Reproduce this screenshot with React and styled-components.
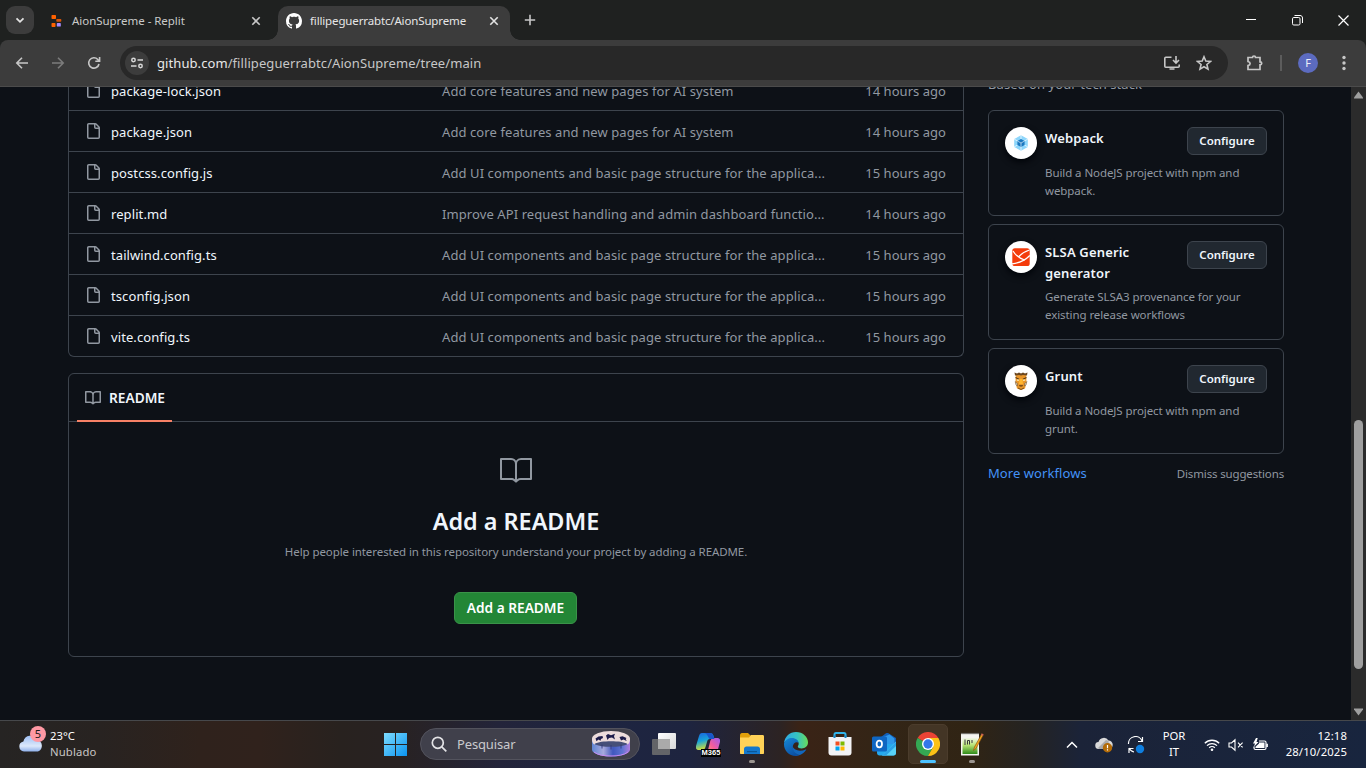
import React from "react";
import styled, { createGlobalStyle } from "styled-components";

const GlobalStyle = createGlobalStyle`
  * { box-sizing: border-box; }
  body { margin: 0; background: #0d1117; overflow: hidden; font-family: "Noto Sans", "Open Sans", sans-serif; }
  svg { display: block; flex: none; }
  button { font-family: inherit; margin: 0; }
`;

const Screen = styled.div`
  width: 1366px;
  height: 768px;
  display: flex;
  flex-direction: column;
  overflow: hidden;
  background: #0d1117;
`;

/* ---------- browser chrome ---------- */

const TabStrip = styled.div`
  height: 40px;
  flex: none;
  display: flex;
  background: #1f2120;
`;

const TabSearch = styled.div`
  width: 28px;
  height: 28px;
  margin: 6px 6px 0 6px;
  border-radius: 9px;
  background: #3c3c3c;
  display: grid;
  place-items: center;
`;

const Tab = styled.div`
  position: relative;
  width: ${(p) => (p.$active ? 232 : 238)}px;
  height: 34px;
  margin-top: 6px;
  padding: 0 ${(p) => (p.$active ? 10 : 16)}px 5px 8px;
  display: flex;
  align-items: center;
  border-radius: 10px 10px 0 0;
  background: ${(p) => (p.$active ? "#3c3c3c" : "transparent")};
  color: ${(p) => (p.$active ? "#e6e6e6" : "#c9cac9")};
  &::before, &::after {
    content: "";
    display: ${(p) => (p.$active ? "block" : "none")};
    position: absolute;
    bottom: 0;
    width: 10px;
    height: 10px;
  }
  &::before { left: -10px; background: radial-gradient(circle at 0 0, transparent 9.5px, #3c3c3c 10px); }
  &::after { right: -10px; background: radial-gradient(circle at 100% 0, transparent 9.5px, #3c3c3c 10px); }
`;

const TabTitle = styled.span`
  flex: 1;
  margin-left: 8px;
  padding-top: 1px;
  font-size: 11.5px;
  line-height: 16px;
  letter-spacing: ${(p) => p.$spacing || 0}px;
  white-space: nowrap;
`;

const NewTab = styled.div`
  width: 40px;
  height: 40px;
  display: grid;
  place-items: center;
`;

const WindowButtons = styled.div`
  display: flex;
  margin-left: auto;
`;

const WindowButton = styled.div`
  width: 46px;
  height: 40px;
  display: grid;
  place-items: center;
`;

const ToolbarBack = styled.div`
  flex: none;
  background: #1f2120;
`;

const Toolbar = styled.div`
  height: 47px;
  display: flex;
  align-items: center;
  padding: 0 0 1px 10px;
  border-radius: 8px 8px 0 0;
  border-bottom: 1px solid #4b4b4b;
  background: #3c3c3c;
`;

const ToolButton = styled.div`
  width: ${(p) => p.$width || 36}px;
  display: grid;
  place-items: center;
  flex: none;
`;

const AddressBar = styled.div`
  width: 1108px;
  height: 34px;
  flex: none;
  padding: 0 8px 0 5px;
  display: flex;
  align-items: center;
  border-radius: 17px;
  background: #282828;
`;

const SiteInfo = styled.div`
  width: 24px;
  height: 24px;
  border-radius: 50%;
  background: #3c3c3c;
  display: grid;
  place-items: center;
`;

const Address = styled.div`
  flex: 1;
  margin-left: 8px;
  font-size: 13px;
  letter-spacing: 0.08px;
  color: #c7c7c7;
  b { font-weight: 400; color: #e8e8e8; }
`;

const Divider = styled.div`
  width: 2px;
  height: 16px;
  flex: none;
  margin: 0 16px 0 0;
  background: #5c5c5c;
`;

const Avatar = styled.div`
  width: 20px;
  height: 20px;
  flex: none;
  border-radius: 50%;
  background: #5c6bc0;
  color: #eceef8;
  font-size: 11px;
  line-height: 20px;
  text-align: center;
`;

/* ---------- page ---------- */

const Viewport = styled.div`
  height: 633px;
  flex: none;
  display: flex;
  overflow: hidden;
  background: #0d1117;
`;

const Page = styled.main`
  width: 1351px;
  display: flex;
  align-items: flex-start;
  gap: 24px;
  padding-left: 68px;
`;

const Content = styled.div`
  width: 896px;
`;

const FileTable = styled.div`
  margin-top: -17px;
  border: 1px solid #3d444d;
  border-top: 0;
  border-radius: 0 0 6px 6px;
`;

const FileRow = styled.div`
  height: 41px;
  display: flex;
  align-items: center;
  padding: 0 17px 0 16px;
  border-bottom: 1px solid #3d444d;
  font-size: 13px;
  line-height: 21px;
  letter-spacing: 0.09px;
  white-space: nowrap;
  color: #9198a1;
  &:last-child { height: 40px; border-bottom: 0; }
`;

const FileName = styled.span`
  width: 331px;
  margin-left: 10px;
  padding-top: 3px;
  color: #f0f6fc;
`;

const CommitMessage = styled.span`
  flex: 1;
  padding-top: 3px;
`;

const FileAge = styled.span`
  padding-top: 3px;
  letter-spacing: 0.04px;
`;

const ReadmeBox = styled.section`
  height: 284px;
  margin-top: 16px;
  border: 1px solid #3d444d;
  border-radius: 6px;
`;

const ReadmeTabs = styled.div`
  height: 48px;
  padding-left: 8px;
  border-bottom: 1px solid #3d444d;
`;

const ReadmeTab = styled.div`
  width: 95px;
  height: 48px;
  display: flex;
  align-items: center;
  gap: 8px;
  padding-left: 8px;
  border-bottom: 2px solid #f78166;
  color: #f0f6fc;
  font-size: 13.7px;
  font-weight: 600;
  svg { margin-top: 2px; }
`;

const Blankslate = styled.div`
  display: flex;
  flex-direction: column;
  align-items: center;
  padding-top: 32px;
`;

const BlankTitle = styled.h2`
  margin: 17px 0 0;
  font-size: 23.4px;
  line-height: 36px;
  font-weight: 600;
  color: #f0f6fc;
`;

const BlankText = styled.p`
  margin: 4px 0 0;
  font-size: 11.5px;
  line-height: 18px;
  letter-spacing: -0.08px;
  color: #9198a1;
`;

const PrimaryButton = styled.button`
  width: 123px;
  height: 32px;
  margin: 31px 1px 0 0;
  padding: 0 0 2px;
  border: 1px solid #3a9349;
  border-radius: 6px;
  background: #238636;
  color: #fff;
  font-size: 13.7px;
  font-weight: 600;
  white-space: nowrap;
`;

const Sidebar = styled.aside`
  width: 296px;
`;

const SideNote = styled.div`
  margin-top: -13px;
  height: 36px;
  font-size: 13px;
  line-height: 21px;
  letter-spacing: 0.07px;
  color: #9198a1;
`;

const WorkflowCard = styled.div`
  display: flex;
  margin-bottom: 8px;
  padding: 16px 16px 15px;
  border: 1px solid #3d444d;
  border-radius: 6px;
`;

const WorkflowLogo = styled.div`
  width: 32px;
  height: 32px;
  flex: none;
  border-radius: 50%;
  background: #fff;
  display: grid;
  place-items: center;
  box-shadow: 0 3px 6px #010409;
`;

const WorkflowBody = styled.div`
  flex: 1;
  margin-left: 8px;
`;

const WorkflowHead = styled.div`
  min-height: 33px;
  display: flex;
  justify-content: space-between;
  align-items: flex-start;
`;

const WorkflowTitle = styled.div`
  width: 110px;
  padding-top: 1px;
  font-size: 13px;
  line-height: 21px;
  font-weight: 600;
  letter-spacing: 0.16px;
  color: #f0f6fc;
`;

const ConfigureButton = styled.button`
  width: 80px;
  height: 28px;
  padding: 0 0 1px;
  border: 1px solid #3d444d;
  border-radius: 6px;
  background: #212830;
  color: #f0f6fc;
  font-size: 11.5px;
  font-weight: 600;
`;

const WorkflowText = styled.div`
  margin-top: 4px;
  width: 210px;
  font-size: 11.5px;
  line-height: 18px;
  letter-spacing: -0.08px;
  color: #9198a1;
`;

const SideFooter = styled.div`
  display: flex;
  justify-content: space-between;
  align-items: center;
  height: 22px;
  font-size: 11.5px;
  letter-spacing: -0.15px;
  color: #9198a1;
`;

const MoreLink = styled.a`
  font-size: 13px;
  letter-spacing: 0.07px;
  color: #4493f8;
`;

const ScrollTrack = styled.div`
  width: 15px;
  display: flex;
  flex-direction: column;
  align-items: center;
  background: #2b2b2b;
  padding: 4px 0 4px;
`;

const ScrollThumb = styled.div`
  width: 9px;
  height: 249px;
  margin: 321px 0 auto;
  border-radius: 5px;
  background: #9f9f9f;
`;

/* ---------- taskbar ---------- */

const Taskbar = styled.div`
  height: 48px;
  flex: none;
  display: flex;
  align-items: center;
  border-top: 1px solid #46484b;
  background: linear-gradient(90deg, #262423 0, #282321 100px, #2f221c 200px, #30221c 260px, #28221f 340px, #282222 400px, #23243a 500px, #1e2541 600px, #1e243f 690px, #2c2323 780px, #3a2316 800px, #332516 880px, #302414 970px, #242322 1030px, #1b2338 1080px, #18253e 1366px);
`;

const Weather = styled.div`
  width: 379px;
  height: 100%;
  padding: 4px 0 0 16px;
  display: flex;
`;

const WeatherIcon = styled.div`
  position: relative;
  width: 34px;
  padding-top: 8px;
`;

const WeatherBadge = styled.span`
  position: absolute;
  left: 14px;
  top: 1px;
  width: 16px;
  height: 16px;
  border-radius: 50%;
  background: #ff99a4;
  color: #1b1b1b;
  font-size: 11px;
  line-height: 16px;
  text-align: center;
`;

const WeatherText = styled.div`
  font-size: 11.3px;
  line-height: 16px;
  color: #fff;
  padding-top: 3px;
  span { display: block; color: #c8c6c5; letter-spacing: 0.15px; }
`;

const StartButton = styled.div`
  width: 33px;
  padding-left: 5px;
`;

const SearchPill = styled.div`
  width: 220px;
  height: 32px;
  margin: 0 2px 1px 8px;
  padding: 0 9px 0 10px;
  display: flex;
  align-items: center;
  border: 1px solid #53535d;
  border-radius: 16px;
  background: #40404b;
  color: #c9c9cd;
  font-size: 13px;
`;

const SearchLabel = styled.span`
  flex: 1;
  margin-left: 10px;
  letter-spacing: -0.15px;
`;

const AppSlot = styled.div`
  position: relative;
  width: 40px;
  height: 40px;
  margin: 0 2px 1px;
  display: grid;
  place-items: center;
  border: 1px solid ${(p) => (p.$active ? "#4b3c2c" : "transparent")};
  border-radius: 5px;
  background: ${(p) => (p.$active ? "#433525" : "transparent")};
  &::after {
    content: "";
    display: ${(p) => (p.$active || p.$open ? "block" : "none")};
    position: absolute;
    bottom: 0;
    left: ${(p) => (p.$active ? 11 : 16)}px;
    width: ${(p) => (p.$active ? 16 : 6)}px;
    height: 3px;
    border-radius: 2px;
    background: ${(p) => (p.$active ? "#4cc2ff" : "#9b9590")};
  }
`;

const IconLabel = styled.span`
  position: absolute;
  left: 12px;
  top: 24px;
  width: 20px;
  height: 8px;
  text-align: center;
  font: 700 7.5px/8px "Liberation Sans", sans-serif;
  background: #000;
  color: #fff;
`;

const Tray = styled.div`
  margin-left: auto;
  padding-right: 19px;
  display: flex;
  align-items: center;
  color: #fff;
`;

const TrayItem = styled.div`
  width: ${(p) => p.$width}px;
  display: grid;
  place-items: center;
`;

const TrayText = styled.div`
  width: ${(p) => p.$width}px;
  text-align: ${(p) => p.$align};
  font-size: 11.3px;
  line-height: 16px;
  letter-spacing: ${(p) => p.$spacing || 0}px;
  padding-bottom: 1px;
`;

/* ---------- icons ---------- */

const Line = ({ w = 16, h = w, box = `0 0 ${w} ${h}`, color = "#c7c7c7", sw = 1.6, children }) => (
  <svg width={w} height={h} viewBox={box} fill="none" stroke={color} strokeWidth={sw}>{children}</svg>
);

const CloseIcon = ({ color }) => <Line w={12} color={color} sw={1.6}><path d="M2.3 2.3 9.7 9.7M9.7 2.3 2.3 9.7" /></Line>;

const GithubMark = () => (
  <svg width="16" height="16" viewBox="0 0 16 16" fill="#fff">
    <path d="M8 0c4.42 0 8 3.58 8 8a8.013 8.013 0 0 1-5.45 7.59c-.4.08-.55-.17-.55-.38 0-.27.01-1.13.01-2.2 0-.75-.25-1.23-.54-1.48 1.78-.2 3.65-.88 3.65-3.95 0-.88-.31-1.59-.82-2.15.08-.2.36-1.02-.08-2.12 0 0-.67-.22-2.2.82-.64-.18-1.32-.27-2-.27-.68 0-1.36.09-2 .27-1.53-1.03-2.2-.82-2.2-.82-.44 1.1-.16 1.92-.08 2.12-.51.56-.82 1.28-.82 2.15 0 3.06 1.86 3.75 3.64 3.95-.23.2-.44.55-.51 1.07-.46.21-1.61.55-2.33-.66-.15-.24-.6-.83-1.23-.82-.67.01-.27.38.01.53.34.19.73.9.82 1.13.16.45.68 1.31 2.69.94 0 .67.01 1.3.01 1.49 0 .21-.15.45-.55.38A7.995 7.995 0 0 1 0 8c0-4.42 3.58-8 8-8Z" />
  </svg>
);

const ReplitMark = () => (
  <svg width="16" height="16" viewBox="0 0 16 16">
    <rect x="3.500" y="2" width="4.500" height="4" rx=".7" fill="#ff6200" />
    <rect x="8.300" y="6" width="5" height="2.700" rx=".7" fill="#d9540a" />
    <rect x="3.500" y="10" width="4" height="4" rx=".7" fill="#ff6200" />
    <rect x="8.800" y="10" width="4" height="3.600" rx=".7" fill="#a58bff" />
  </svg>
);

const FileIcon = () => (
  <svg width="16" height="16" viewBox="0 0 16 16" fill="#9198a1">
    <path d="M2 1.75C2 .784 2.784 0 3.75 0h6.586c.464 0 .909.184 1.237.513l2.914 2.914c.329.328.513.773.513 1.237v9.586A1.75 1.75 0 0 1 13.25 16h-9.5A1.75 1.75 0 0 1 2 14.25Zm1.75-.25a.25.25 0 0 0-.25.25v12.5c0 .138.112.25.25.25h9.5a.25.25 0 0 0 .25-.25V6h-2.75A1.75 1.75 0 0 1 9 4.25V1.5Zm6.75.062V4.25c0 .138.112.25.25.25h2.688l-.011-.013-2.914-2.914-.013-.011Z" />
  </svg>
);

const BookIcon = () => (
  <svg width="16" height="16" viewBox="0 0 16 16" fill="#9198a1">
    <path d="M0 1.75A.75.75 0 0 1 .75 1h4.253c1.227 0 2.317.59 3 1.501A3.743 3.743 0 0 1 11.006 1h4.245a.75.75 0 0 1 .75.75v10.5a.75.75 0 0 1-.75.75h-4.507a2.25 2.25 0 0 0-1.591.659l-.622.621a.75.75 0 0 1-1.06 0l-.622-.621A2.25 2.25 0 0 0 5.258 13H.75a.75.75 0 0 1-.75-.75Zm7.251 10.324.004-5.073-.002-2.253A2.25 2.25 0 0 0 5.003 2.5H1.5v9h3.757a3.75 3.75 0 0 1 1.994.574ZM8.755 4.75l-.004 7.322a3.752 3.752 0 0 1 1.992-.572H14.5v-9h-3.495a2.25 2.25 0 0 0-2.25 2.25Z" />
  </svg>
);

const BookLargeIcon = () => (
  <svg width="32" height="32" viewBox="0 0 24 24" fill="#9198a1">
    <path d="M0 3.75A.75.75 0 0 1 .75 3h7.497c1.566 0 2.945.8 3.751 2.014A4.495 4.495 0 0 1 15.75 3h7.5a.75.75 0 0 1 .75.75v15.063a.752.752 0 0 1-.755.75l-7.682-.052a3 3 0 0 0-2.142.878l-.89.891a.75.75 0 0 1-1.061 0l-.902-.901a2.996 2.996 0 0 0-2.121-.879H.75a.75.75 0 0 1-.75-.75Zm12.75 15.232a4.503 4.503 0 0 1 2.823-.971l6.927.047V4.5h-6.75a3 3 0 0 0-3 3ZM11.247 7.497a3 3 0 0 0-3-2.997H1.5V18h6.947c1.018 0 2.006.346 2.803.98Z" />
  </svg>
);

const WebpackLogo = () => (
  <svg width="16" height="16" viewBox="0 0 16 16">
    <path d="M8 .3 14.8 4.1v7.8L8 15.7 1.2 11.9V4.1Z" fill="#8ed6fb" />
    <path d="M8 .3V4M8 12v3.7M1.2 4.1 4.6 6M14.8 4.1 11.4 6M1.2 11.9 4.6 10M14.8 11.9 11.4 10" stroke="#fff" strokeWidth=".7" />
    <path d="M8 3.9 11.6 6v4L8 12.1 4.4 10V6Z" fill="#1c78c0" />
    <path d="M8 8v4.1M8 8 4.4 6M8 8l3.6-2" stroke="#fff" strokeWidth=".6" />
  </svg>
);

const SlsaLogo = () => (
  <svg width="18" height="18" viewBox="0 0 18 18">
    <rect x=".3" y=".2" width="17.4" height="17.8" rx="2.6" fill="#f43b0b" />
    <path d="M1 3C4 8 8 10.500 13 12.200M17.500 2C13 3.500 9.500 5.500 7 8.500M17.800 7.500C13 12.500 7 15 0 15.800" fill="none" stroke="#fff" strokeWidth="1.200" />
  </svg>
);

const GruntLogo = () => (
  <svg width="16" height="20" viewBox="0 0 16 20">
    <path d="M2.800 3.500h10.400l.3 8-1.500 6L8 19l-4-1.500-1.500-6Z" fill="#e9962a" />
    <path d="M1.500 1.500 4 2.500l2-1L8 2.500l2-1 2 1 2.500-1-.5 3L10 4 8 4.500 6 4 2 4.500Z" fill="#6b4720" />
    <path d="m2.500 6.500 3.500 1.700M13.500 6.500 10 8.200" stroke="#593813" strokeWidth="1.100" />
    <path d="M3.800 8.500h2.200v1.200H3.800ZM10 8.500h2.200v1.200H10Z" fill="#fff0b8" />
    <path d="M6.500 8h3l.5 5H6Z" fill="#ffb62e" />
    <path d="M5.800 14.300h4.400l-1 1.200H6.800Z" fill="#593813" />
    <path d="M2.200 10.500 3 14l1.500 1V12.800ZM13.800 10.500 13 14l-1.500 1V12.800Z" fill="#d5d0bd" stroke="#6b4720" strokeWidth=".5" />
    <path d="m5 17 3 1.500L11 17" fill="none" stroke="#7a4d18" />
  </svg>
);

const CloudIcon = () => (
  <svg width="28" height="22" viewBox="0 0 28 22">
    <defs><linearGradient id="cloud" x2="0" y2="1"><stop stopColor="#9fc0f4" /><stop offset=".65" stopColor="#dce8fb" /><stop offset="1" stopColor="#8fb0ea" /></linearGradient></defs>
    <path d="M8 18a5 5 0 0 1-.6-9.900A7.200 7.200 0 0 1 21 6.500 6 6 0 0 1 22 18Z" transform="translate(0 .5)" fill="url(#cloud)" />
  </svg>
);

const WindowsLogo = () => (
  <svg width="23" height="23" viewBox="0 0 23 23">
    <defs><linearGradient id="win" x2="1" y2="1"><stop stopColor="#7ddcff" /><stop offset="1" stopColor="#0a94f0" /></linearGradient></defs>
    <path d="M0 0h11v11H0ZM12 0h11v11H12ZM0 12h11v11H0ZM12 12h11v11H12Z" fill="url(#win)" />
  </svg>
);

const DrumArt = () => (
  <svg width="38" height="26" viewBox="0 0 38 26">
    <defs>
      <linearGradient id="drum" x2="1"><stop stopColor="#5f86d4" /><stop offset=".3" stopColor="#a7a9dc" /><stop offset=".55" stopColor="#4057bd" /><stop offset=".8" stopColor="#5f74d2" /><stop offset="1" stopColor="#b07de0" /></linearGradient>
    </defs>
    <path d="M0 7v12c1 4 9 6.500 19 6.500S37 23 38 19V7Z" fill="url(#drum)" />
    <ellipse cx="19" cy="7.500" rx="19" ry="7.500" fill="#ecdcdc" />
    <path d="M0 8c0 4 1.500 5 2.500 5.500C6 10.500 12 9.500 19 9.500s13 1 16.500 4C37 12.500 38 11 38 8Z" fill="#ecdcdc" />
    <path d="M2.500 13C6 10.800 12 10.200 19 10.200s13 .6 16.500 2.800C32 15 26 15.800 19 15.800S6 15 2.500 13Z" fill="#454f78" />
    <path d="M3.500 7.500 6.500 5.500l4-.5.5 2-2 1-.5 1.800L6.500 8.500 4.500 10.200ZM14 4.500l2-1.500L19 4.200l4-1.500L22 5.200 23 8.500 20 6.500 17 7l-1.500 2ZM27.500 6l3-.7L34.500 7l-.8 1 1 2L31.500 8.500 29 9.500Z" fill="#1c1b4a" />
    <path d="M10 13.500v4M19 14v4.500M29 13.500v4" stroke="#2c3477" strokeWidth=".8" />
    <path d="M2 21c4 3 10 4 17 4s13-1 17-4" fill="none" stroke="#c88af0" strokeWidth="1" />
  </svg>
);

const TaskViewIcon = () => (
  <svg width="24" height="22" viewBox="0 0 24 22">
    <defs><linearGradient id="tv" x2="1" y2="1"><stop stopColor="#fff" /><stop offset="1" stopColor="#d8d8d8" /></linearGradient></defs>
    <rect x="6" width="18" height="16" rx="1" fill="url(#tv)" />
    <rect y="6" width="18" height="16" rx="1" fill="#6d6d6d" fillOpacity=".88" />
    <rect x="6" y="6" width="12" height="10" fill="#aaa" />
  </svg>
);

const CopilotIcon = () => (
  <svg width="24" height="24" viewBox="0 0 24 24">
    <defs>
      <linearGradient id="cpa" x2=".3" y2="1"><stop stopColor="#1b62dd" /><stop offset=".5" stopColor="#17a3d8" /><stop offset="1" stopColor="#d7df36" /></linearGradient>
      <linearGradient id="cpb" x1="1" x2="0" y2="1"><stop stopColor="#9c5cf0" /><stop offset=".5" stopColor="#f45d9c" /><stop offset="1" stopColor="#ffad61" /></linearGradient>
    </defs>
    <path d="M6 1h8c2 0 3 1 3.500 3L18.500 7H14c-2 0-2.500 1-3 3l-1.500 5c-.5 2-1.500 3-3.500 3H3c-2.500 0-3.500-1.500-3-4L3 4c.5-2 1.500-3 3-3Z" fill="url(#cpa)" />
    <path d="M14 6h7c2.500 0 3.500 1.500 3 4l-2.500 9c-.5 2-2 3-4 3H9c2 0 2.500-2 3-4l2-8c.3-2 1-3 3-4Z" fill="url(#cpb)" />
    <path d="M8 1h6c2 0 3 1 3.500 3L18.500 7H14c-2 0-2-6-6-6Z" fill="#1956c8" />
  </svg>
);

const FolderIcon = () => (
  <svg width="24" height="24" viewBox="0 0 24 24">
    <path d="M0 3.500C0 2 .7 1 2 1h6l2.500 2.500V8H0Z" fill="#e09f0a" />
    <path d="M0 5.500h9L11 3h11.500c1 0 1.500.5 1.500 1.500V21c0 .6-.4 1-1 1H1c-.6 0-1-.4-1-1Z" fill="#ffd257" />
    <path d="M4 22v-5c0-1.500 1-2.500 2.500-2.500h11c1.500 0 2.500 1 2.500 2.500v5Z" fill="#1377cc" />
    <path d="M7 19h10v1.200H7Z" fill="#0a5596" />
  </svg>
);

const EdgeIcon = () => (
  <svg width="24" height="24" viewBox="0 0 24 24">
    <defs>
      <linearGradient id="ega" x2="1"><stop stopColor="#2fa8e6" /><stop offset=".55" stopColor="#36c2c1" /><stop offset="1" stopColor="#68dc5a" /></linearGradient>
      <linearGradient id="egb" x2=".6" y2="1"><stop stopColor="#1689d7" /><stop offset="1" stopColor="#0b50a4" /></linearGradient>
    </defs>
    <path d="M0 11C.8 4.500 5.700 0 12 0c7 0 12 5 12 10.300 0 4-3 6.200-6.300 6.200-2.500 0-3.900-1-3.900-2 0-.7.9-1 .9-2.700 0-2.600-2.400-4.600-5.500-4.600C4.500 7.200 1.500 9 0 11Z" fill="url(#ega)" />
    <path d="M0 11.500C1.200 8 4.500 6 8 6c3.700 0 6.500 2.500 6.700 5-2.200-1.800-6 .2-6 4.300 0 4 3.300 6.700 7 7.700-1 .6-2.500 1-4 1C5 24 0 18.500 0 12.500Z" fill="url(#egb)" />
    <path d="M8.300 14c-.5 4.500 3.200 8.700 7.700 9 2.700-.9 5-3 6.200-5.200.2-.4-.1-.6-.5-.4-6 2.600-11.500 1-13.400-3.400Z" fill="#1267bd" />
  </svg>
);

const StoreIcon = () => (
  <svg width="24" height="24" viewBox="0 0 24 24">
    <path d="M6.500 6V2.500c0-1 .5-1.500 1.500-1.500h8c1 0 1.500.5 1.500 1.500V6" fill="none" stroke="#32b4ea" strokeWidth="2" />
    <path d="M.5 5h23v15.500c0 2-1 3-3 3h-17c-2 0-3-1-3-3Z" fill="#f3f3f5" />
    <path d="M7.500 9.500h4v4h-4Z" fill="#f25022" /><path d="M12.500 9.500h4v4h-4Z" fill="#7fba00" />
    <path d="M7.500 14.500h4v4h-4Z" fill="#00a4ef" /><path d="M12.500 14.500h4v4h-4Z" fill="#ffb900" />
    <path d="M6.500 6V3.500M17.500 6V3.500" stroke="#1685c5" strokeWidth="2" />
  </svg>
);

const OutlookIcon = () => (
  <svg width="24" height="24" viewBox="0 0 24 24">
    <path d="M5 8 14 1.300c.8-.5 1.700-.5 2.500 0L24 6v5H5Z" fill="#135fb8" />
    <path d="M9 6 17.500 2.500l5 4V14H9Z" fill="#2f98ea" />
    <path d="M5 12h19v9c0 1.500-1 2.500-2.500 2.500H7.500C6 23.500 5 22.500 5 21Z" fill="#25a8ed" />
    <path d="M24 9.500v11.500c0 1.500-1 2.500-2.500 2.500H10Z" fill="#58d2f8" />
    <path d="M10 23.500 24 10v4L14 23.500Z" fill="#2ba2e8" />
    <rect y="4.500" width="15" height="15" rx="1.500" fill="#0f66c2" />
    <ellipse cx="7.300" cy="12" rx="2.700" ry="3.300" fill="none" stroke="#fff" strokeWidth="1.800" />
  </svg>
);

const ChromeIcon = () => (
  <svg width="24" height="24" viewBox="0 0 48 48">
    <path d="M24 24 3.200 12A24 24 0 0 1 44.800 12Z" fill="#ea4335" />
    <path d="M24 24 3.200 12A24 24 0 0 0 24 48L34.400 30Z" fill="#34a853" />
    <path d="M44.800 12H24v12l10.400 6L24 48A24 24 0 0 0 44.800 12Z" fill="#fbc116" />
    <circle cx="24" cy="24" r="12" fill="#fff" />
    <circle cx="24" cy="24" r="9.300" fill="#3478ea" />
  </svg>
);

const NotepadIcon = () => (
  <svg width="24" height="24" viewBox="0 0 24 24">
    <defs><linearGradient id="np" x2="0" y2="1"><stop stopColor="#f1f6e7" /><stop offset=".45" stopColor="#b7e374" /><stop offset="1" stopColor="#2e8b18" /></linearGradient></defs>
    <path d="M1 1.500h18v22H1Z" fill="#f5f5f1" />
    <path d="M2.500 6h15v16h-15Z" fill="url(#np)" />
    <path d="M1.500 1.500h17" stroke="#555" strokeWidth="1.500" strokeDasharray="1 1" />
    <path d="M5 7.500v5.500M7.500 12.500V8.500h2V12.500M12 8v3" fill="none" stroke="#393939" strokeWidth="1" />
    <path d="M21.300 2.500 14.500 15l-1 3.500L16 16.500 23 3.500Z" fill="#f0a51d" stroke="#7d4b13" strokeWidth=".6" />
    <path d="m21.700 1.200 2 1.300-.8 1.500L21 3Z" fill="#c96353" />
  </svg>
);

const TrayCloud = () => (
  <svg width="18" height="16" viewBox="0 0 18 16">
    <path d="M4 12A3.500 3.500 0 0 1 3.500 5 5.500 5.500 0 0 1 13.500 3.500 4 4 0 0 1 13.500 12Z" fill="#d9d9d9" />
    <path d="M3 11 11 3l2.500 1L14 12H4Z" fill="#a9a9a9" />
    <circle cx="12.500" cy="10.700" r="4.700" fill="#b36b07" />
    <path d="M12.500 8v3.300M12.500 12.200v1.300" stroke="#fff" strokeWidth="1.200" />
  </svg>
);

const SyncIcon = () => (
  <svg width="18" height="18" viewBox="0 0 18 18" fill="none" stroke="#fff" strokeWidth="1.200">
    <path d="M1.500 8A7 7 0 0 1 15 5M15.500 1v4.500H11M2 12A7 7 0 0 0 7 16M6.500 12.500H2V17" />
    <circle cx="13" cy="13" r="4.200" fill="#0f7fe0" stroke="none" />
  </svg>
);

const WifiIcon = () => (
  <Line w={16} h={14} color="#fff" sw={1.3}>
    <path d="M.8 5.200a10.300 10.300 0 0 1 14.400 0M3 7.600a7.200 7.200 0 0 1 10 0M5.200 9.800a4 4 0 0 1 5.600 0" />
    <circle cx="8" cy="11.800" r="1.300" fill="#fff" stroke="none" />
  </Line>
);

const MuteIcon = () => (
  <Line w={16} h={14} color="#fff" sw={1.100}>
    <path d="M1 5h2.500L7 1.800v10.400L3.500 9H1ZM10 4.700l4.600 4.600M14.600 4.700 10 9.300" />
  </Line>
);

const BatteryIcon = () => (
  <Line w={17} h={14} color="#fff" sw={1.200}>
    <path d="M7 3h5.500c1 0 1.500.5 1.500 1.500v5.500c0 1-.5 1.500-1.500 1.500H3.500C2.500 11.500 2 11 2 10V8.500M15.300 5.700v3.200" />
    <path d="M7 4.500h5.500V10H3.500V8.700L7 5.500Z" fill="#fff" stroke="none" />
    <path d="M4 0 1 5.500h2L2 8.800 6.500 4H4.500L5.700 0Z" fill="#fff" stroke="none" />
  </Line>
);

/* ---------- data ---------- */

const UI_MSG = "Add UI components and basic page structure for the applica...";
const CORE_MSG = "Add core features and new pages for AI system";

const files = [
  ["package-lock.json", CORE_MSG, "14 hours ago"],
  ["package.json", CORE_MSG, "14 hours ago"],
  ["postcss.config.js", UI_MSG, "15 hours ago"],
  ["replit.md", "Improve API request handling and admin dashboard functio...", "14 hours ago"],
  ["tailwind.config.ts", UI_MSG, "15 hours ago"],
  ["tsconfig.json", UI_MSG, "15 hours ago"],
  ["vite.config.ts", UI_MSG, "15 hours ago"],
];

const workflows = [
  ["Webpack", "Build a NodeJS project with npm and webpack.", WebpackLogo],
  ["SLSA Generic generator", "Generate SLSA3 provenance for your existing release workflows", SlsaLogo],
  ["Grunt", "Build a NodeJS project with npm and grunt.", GruntLogo],
];

const apps = [
  { id: "taskview", Icon: TaskViewIcon },
  { id: "copilot", Icon: CopilotIcon, label: "M365" },
  { id: "explorer", Icon: FolderIcon, open: true },
  { id: "edge", Icon: EdgeIcon },
  { id: "store", Icon: StoreIcon },
  { id: "outlook", Icon: OutlookIcon },
  { id: "chrome", Icon: ChromeIcon, active: true },
  { id: "notepad", Icon: NotepadIcon, open: true },
];

const BrowserChrome = () => (
  <>
    <TabStrip>
      <TabSearch><Line w={10} color="#e3e3e3" sw={1.8}><path d="M1.500 3.300 5 6.800l3.500-3.500" /></Line></TabSearch>
      <Tab>
        <ReplitMark />
        <TabTitle $spacing={-0.04}>AionSupreme - Replit</TabTitle>
        <CloseIcon color="#c7c7c7" />
      </Tab>
      <Tab $active>
        <GithubMark />
        <TabTitle $spacing={-0.14}>fillipeguerrabtc/AionSupreme</TabTitle>
        <CloseIcon color="#e3e3e3" />
      </Tab>
      <NewTab><Line w={12} color="#c7c7c7" sw={1.6}><path d="M6 .8v10.400M.8 6h10.400" /></Line></NewTab>
      <WindowButtons>
        <WindowButton><Line w={10} color="#fff" sw={1}><path d="M0 4.500h10" /></Line></WindowButton>
        <WindowButton>
          <Line w={11} color="#fff" sw={1}>
            <rect x=".5" y="2.500" width="7.500" height="7.500" rx="1.300" />
            <path d="M2.500.5H8c1.500 0 2.500 1 2.500 2.500V8" />
          </Line>
        </WindowButton>
        <WindowButton><Line w={11} color="#fff" sw={1.200}><path d="m.5.5 10 10M10.500.5l-10 10" /></Line></WindowButton>
      </WindowButtons>
    </TabStrip>
    <ToolbarBack>
      <Toolbar>
        <ToolButton $width={24}><Line w={14} color="#c7c7c7"><path d="M13 7H2M7 1.800 1.800 7 7 12.200" /></Line></ToolButton>
        <ToolButton $width={48}><Line w={14} color="#7c7c7c"><path d="M1 7h11M7 1.800 12.200 7 7 12.200" /></Line></ToolButton>
        <ToolButton $width={24}><Line w={14} color="#c7c7c7"><path d="M12 8A5.200 5.200 0 1 1 10.800 3.500L12.300 5M12.600 1v4.300H8.300" /></Line></ToolButton>
        <ToolButton $width={14} />
        <AddressBar>
          <SiteInfo>
            <Line w={14} color="#d7d7d7" sw={1.5}>
              <circle cx="3.500" cy="4" r="1.700" /><path d="M7.500 4H13M1 10h5.500" /><circle cx="10.500" cy="10" r="1.700" />
            </Line>
          </SiteInfo>
          <Address><b>github.com</b>/fillipeguerrabtc/AionSupreme/tree/main</Address>
          <ToolButton $width={32}>
            <Line w={18} h={16}><path d="M8.500 2.300H2.800c-.7 0-1 .3-1 1v7.900c0 .7.3 1 1 1h12.400c.7 0 1-.3 1-1V9.500M13 1v6.500M10 5l3 3 3-3M6.500 14h5" /></Line>
          </ToolButton>
          <ToolButton $width={32}>
            <Line w={16}><path d="m8 1.800 1.800 4.300 4.700.4-3.600 3 1.100 4.600L8 11.700 4 14.100l1.100-4.600-3.600-3 4.700-.4Z" /></Line>
          </ToolButton>
        </AddressBar>
        <ToolButton $width={52}>
          <Line w={18} sw={1.7}>
            <path d="M3 3.500h4.500c0-2 3-2 3 0H15v4.300c2.300 0 2.300 3 0 3V15.500H3v-4c2.800-.5 2.800-3.500 0-4Z" />
          </Line>
        </ToolButton>
        <Divider />
        <Avatar>F</Avatar>
        <ToolButton $width={52}>
          <svg width="4" height="16" viewBox="0 0 4 16" fill="#c7c7c7"><circle cx="2" cy="2.500" r="1.700" /><circle cx="2" cy="8" r="1.700" /><circle cx="2" cy="13.500" r="1.700" /></svg>
        </ToolButton>
      </Toolbar>
    </ToolbarBack>
  </>
);

export default function App() {
  return (
    <Screen>
      <GlobalStyle />
      <BrowserChrome />
      <Viewport>
        <Page>
          <Content>
            <FileTable>
              {files.map(([name, message, age]) => (
                <FileRow key={name}>
                  <FileIcon />
                  <FileName>{name}</FileName>
                  <CommitMessage>{message}</CommitMessage>
                  <FileAge>{age}</FileAge>
                </FileRow>
              ))}
            </FileTable>
            <ReadmeBox>
              <ReadmeTabs><ReadmeTab><BookIcon />README</ReadmeTab></ReadmeTabs>
              <Blankslate>
                <BookLargeIcon />
                <BlankTitle>Add a README</BlankTitle>
                <BlankText>Help people interested in this repository understand your project by adding a README.</BlankText>
                <PrimaryButton>Add a README</PrimaryButton>
              </Blankslate>
            </ReadmeBox>
          </Content>
          <Sidebar>
            <SideNote>Based on your tech stack</SideNote>
            {workflows.map(([title, text, Logo]) => (
              <WorkflowCard key={title}>
                <WorkflowLogo><Logo /></WorkflowLogo>
                <WorkflowBody>
                  <WorkflowHead>
                    <WorkflowTitle>{title}</WorkflowTitle>
                    <ConfigureButton>Configure</ConfigureButton>
                  </WorkflowHead>
                  <WorkflowText>{text}</WorkflowText>
                </WorkflowBody>
              </WorkflowCard>
            ))}
            <SideFooter><MoreLink>More workflows</MoreLink><span>Dismiss suggestions</span></SideFooter>
          </Sidebar>
        </Page>
        <ScrollTrack>
          <svg width="9" height="8" viewBox="0 0 9 8" fill="#9f9f9f"><path d="M4.500.5 9 6.500v1H0v-1Z" /></svg>
          <ScrollThumb />
          <svg width="9" height="8" viewBox="0 0 9 8" fill="#9f9f9f"><path d="M4.500 7.500 9 1.500v-1H0v1Z" /></svg>
        </ScrollTrack>
      </Viewport>
      <Taskbar>
        <Weather>
          <WeatherIcon><CloudIcon /><WeatherBadge>5</WeatherBadge></WeatherIcon>
          <WeatherText>23°C<span>Nublado</span></WeatherText>
        </Weather>
        <StartButton><WindowsLogo /></StartButton>
        <SearchPill>
          <Line w={16} color="#e3e3e6" sw={1.7}><circle cx="6.800" cy="6.800" r="5.500" /><path d="m10.800 10.800 4.500 4.500" /></Line>
          <SearchLabel>Pesquisar</SearchLabel>
          <DrumArt />
        </SearchPill>
        {apps.map(({ id, Icon, label, open, active }) => (
          <AppSlot key={id} $open={open} $active={active}>
            <Icon />
            {label && <IconLabel>{label}</IconLabel>}
          </AppSlot>
        ))}
        <Tray>
          <TrayItem $width={32}><Line w={12} color="#fff" sw={1.5}><path d="m1 8.500 5-5 5 5" /></Line></TrayItem>
          <TrayItem $width={32}><TrayCloud /></TrayItem>
          <TrayItem $width={32}><SyncIcon /></TrayItem>
          <TrayText $width={44} $align="center">POR<br />IT</TrayText>
          <TrayItem $width={32}><WifiIcon /></TrayItem>
          <TrayItem $width={16}><MuteIcon /></TrayItem>
          <TrayItem $width={32}><BatteryIcon /></TrayItem>
          <TrayText $width={71} $align="right" $spacing={0.12}>12:18<br />28/10/2025</TrayText>
        </Tray>
      </Taskbar>
    </Screen>
  );
}
